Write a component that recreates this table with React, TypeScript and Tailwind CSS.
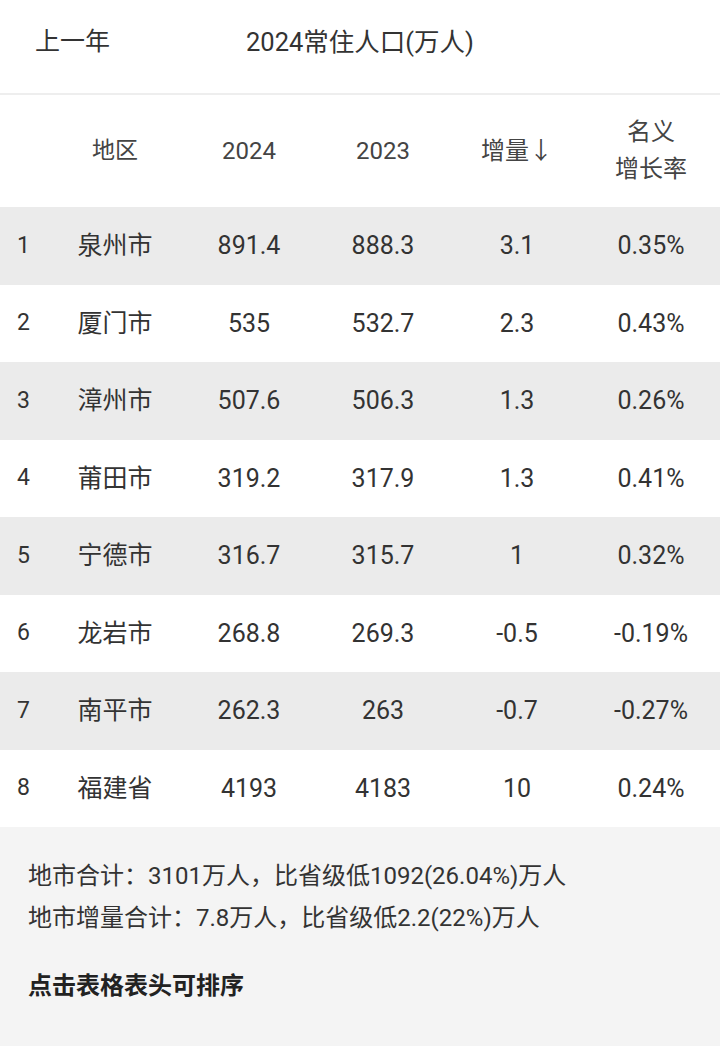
import React from "react";

const rows = [
  ["1", "泉州市", "891.4", "888.3", "3.1", "0.35%"],
  ["2", "厦门市", "535", "532.7", "2.3", "0.43%"],
  ["3", "漳州市", "507.6", "506.3", "1.3", "0.26%"],
  ["4", "莆田市", "319.2", "317.9", "1.3", "0.41%"],
  ["5", "宁德市", "316.7", "315.7", "1", "0.32%"],
  ["6", "龙岩市", "268.8", "269.3", "-0.5", "-0.19%"],
  ["7", "南平市", "262.3", "263", "-0.7", "-0.27%"],
  ["8", "福建省", "4193", "4183", "10", "0.24%"],
];

const font = { fontFamily: 'Roboto, "Noto Sans CJK SC", sans-serif' };

export default function App() {
  return (
    <div className="w-[720px] min-h-[1046px] bg-[#f4f4f4] text-[#333]" style={font}>
      <div className="flex h-[95px] items-center bg-white border-b-2 border-[#eeeeee] px-[35px] pb-[9px] relative">
        <span className="text-[25px]">上一年</span>
        <span className="absolute left-0 right-0 top-0 h-[84px] flex items-center justify-center text-[25.5px] pointer-events-none">
          2024常住人口(万人)
        </span>
      </div>

      <div className="bg-white">
        <div className="grid grid-cols-[48px_repeat(5,134px)] h-[112px] items-center text-[24px] text-[#444]">
          <div />
          <div className="text-center text-[23px]">地区</div>
          <div className="text-center">2024</div>
          <div className="text-center">2023</div>
          <div className="text-center">增量↓</div>
          <div className="text-center leading-[37px]">
            名义
            <br />
            增长率
          </div>
        </div>

        {rows.map((r, i) => (
          <div
            key={r[0]}
            className={`grid grid-cols-[48px_repeat(5,134px)] h-[77.5px] items-center text-[25px] ${
              i % 2 === 0 ? "bg-[#ebebeb]" : "bg-white"
            }`}
          >
            <div className="pl-[17px] text-[23px]">{r[0]}</div>
            {r.slice(1).map((c, j) => (
              <div key={j} className="text-center">
                {c}
              </div>
            ))}
          </div>
        ))}
      </div>

      <div className="px-[28px] pt-[28px] text-[24px] leading-[42px]">
        <div>地市合计：3101万人，比省级低1092(26.04%)万人</div>
        <div>地市增量合计：7.8万人，比省级低2.2(22%)万人</div>
        <div className="mt-[26px] font-bold text-[#222]">点击表格表头可排序</div>
      </div>
    </div>
  );
}
